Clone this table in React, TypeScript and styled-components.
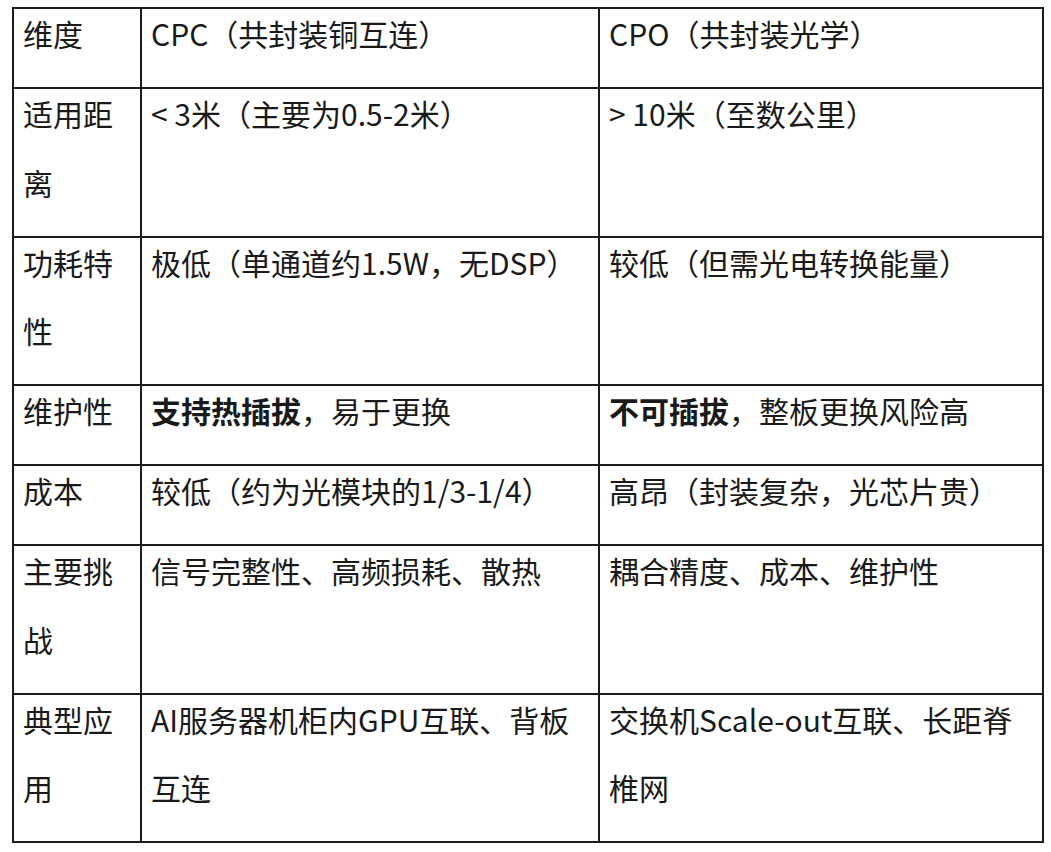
import type { ReactNode } from 'react'
import styled, { createGlobalStyle } from 'styled-components'

const GlobalStyle = createGlobalStyle`
  html, body {
    margin: 0;
    padding: 0;
    background: #ffffff;
  }
  body {
    font-family: "Noto Sans CJK SC", "Noto Sans", sans-serif;
    color: #1a1a1a;
  }
`

const Page = styled.div`
  padding: 7px 0 0 12px;
`

const Table = styled.table`
  width: 1030px;
  border-collapse: collapse;
  table-layout: fixed;
`

const Cell = styled.td`
  border: 2px solid #1c1c1c;
  padding: 0 9px 19.5px 9px;
  vertical-align: top;
  font-size: 30px;
  line-height: 68.5px;
  word-break: break-all;
`

const CellText = styled.div`
  margin-top: -10px;
`

const Strong = styled.strong`
  font-weight: 700;
`

type Row = {
  name: string
  cpc: ReactNode
  cpo: ReactNode
}

const rows: Row[] = [
  { name: '维度', cpc: 'CPC（共封装铜互连）', cpo: 'CPO（共封装光学）' },
  { name: '适用距离', cpc: '< 3米（主要为0.5-2米）', cpo: '> 10米（至数公里）' },
  { name: '功耗特性', cpc: '极低（单通道约1.5W，无DSP）', cpo: '较低（但需光电转换能量）' },
  {
    name: '维护性',
    cpc: (
      <>
        <Strong>支持热插拔</Strong>，易于更换
      </>
    ),
    cpo: (
      <>
        <Strong>不可插拔</Strong>，整板更换风险高
      </>
    ),
  },
  { name: '成本', cpc: '较低（约为光模块的1/3-1/4）', cpo: '高昂（封装复杂，光芯片贵）' },
  { name: '主要挑战', cpc: '信号完整性、高频损耗、散热', cpo: '耦合精度、成本、维护性' },
  { name: '典型应用', cpc: 'AI服务器机柜内GPU互联、背板互连', cpo: '交换机Scale-out互联、长距脊椎网' },
]

export default function App() {
  return (
    <Page>
      <GlobalStyle />
      <Table>
        <colgroup>
          <col style={{ width: 128 }} />
          <col style={{ width: 458 }} />
          <col style={{ width: 444 }} />
        </colgroup>
        <tbody>
          {rows.map((r) => (
            <tr key={r.name}>
              <Cell>
                <CellText>{r.name}</CellText>
              </Cell>
              <Cell>
                <CellText>{r.cpc}</CellText>
              </Cell>
              <Cell>
                <CellText>{r.cpo}</CellText>
              </Cell>
            </tr>
          ))}
        </tbody>
      </Table>
    </Page>
  )
}
